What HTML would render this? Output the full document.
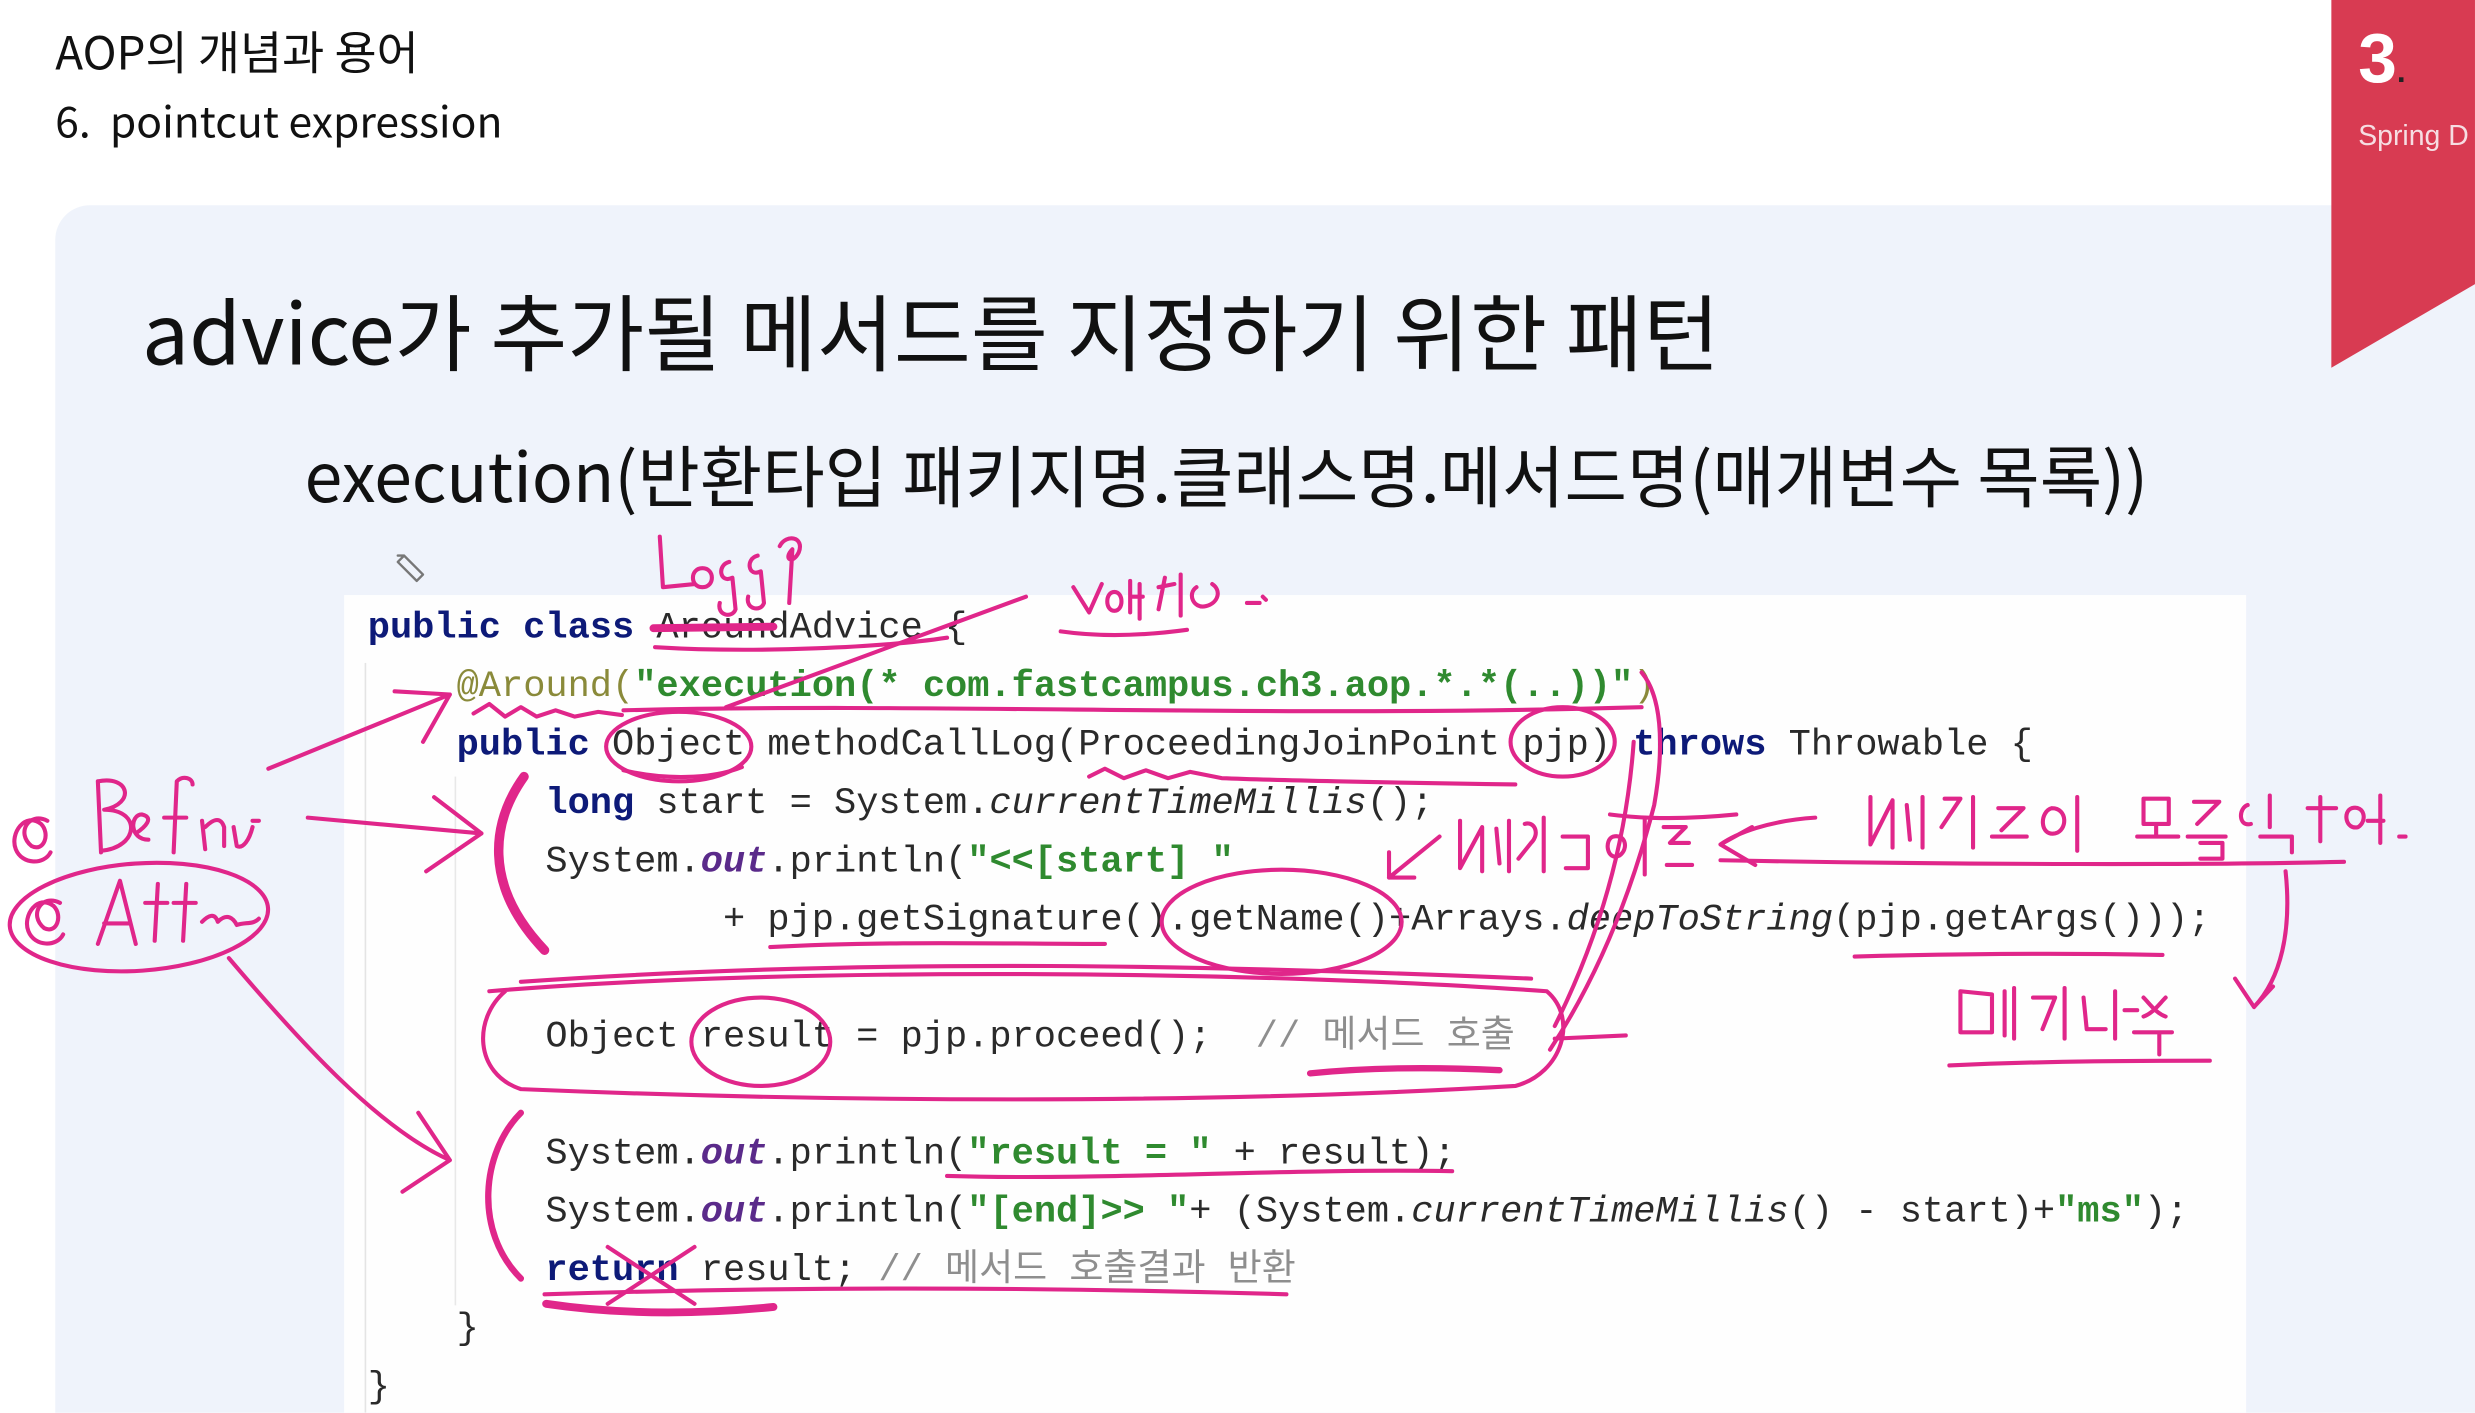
<!DOCTYPE html>
<html><head><meta charset="utf-8">
<style>
html,body{margin:0;padding:0;background:#fff;overflow:hidden}
#w{position:absolute;left:0;top:0;width:1568px;height:895px;transform:scale(1.57844);transform-origin:0 0;background:#fff;font-family:"Liberation Sans","Noto Sans CJK KR",sans-serif;color:#111;overflow:hidden}
.abs{position:absolute;white-space:pre}
.code{position:absolute;left:233px;font-family:"Liberation Mono","Noto Sans CJK KR",monospace;font-size:23.45px;line-height:37px;color:#2a2a2a;white-space:pre}
.k{color:#0d1a78;font-weight:bold}
.s{color:#2f8a2f;font-weight:bold}
.a{color:#8a8a3a}
.c{color:#8e8e8e}
.i{font-style:italic}
.o{font-style:italic;color:#5a2a8a;font-weight:bold}
</style></head><body>
<div id="w">
  <div class="abs" style="left:35px;top:13px;font-size:29px;font-family:'Noto Sans CJK KR','Liberation Sans',sans-serif;line-height:38px">AOP의 개념과 용어</div>
  <div class="abs" style="left:35px;top:57px;font-size:27px;font-family:'Noto Sans CJK KR','Liberation Sans',sans-serif;line-height:38px">6.  pointcut expression</div>

  <div style="position:absolute;left:35px;top:130px;width:1560px;height:800px;background:#eff3fb;border-radius:22px"></div>

  <svg style="position:absolute;left:0;top:0" width="1568" height="895">
    <polygon points="1477,0 1568,0 1568,180 1477,233" fill="#d83b52"/>
  </svg>
  <div class="abs" style="left:1494px;top:12px;font-size:44px;font-weight:bold;color:#fff;line-height:52px">3<span style="color:#222;font-size:20px">.</span></div>
  <div class="abs" style="left:1494px;top:74px;font-size:18px;color:#f6dde2;line-height:24px">Spring D</div>

  <div class="abs" style="left:90px;top:172px;font-size:53px;font-family:'Noto Sans CJK KR','Liberation Sans',sans-serif;line-height:74px;color:#111">advice가 추가될 메서드를 지정하기 위한 패턴</div>
  <div class="abs" style="left:193px;top:270px;font-size:43px;font-family:'Noto Sans CJK KR','Liberation Sans',sans-serif;line-height:60px;color:#111">execution(반환타입 패키지명.클래스명.메서드명(매개변수 목록))</div>

  <div style="position:absolute;left:218px;top:377px;width:1205px;height:530px;background:#fefefe"></div>
  <div style="position:absolute;left:231px;top:420px;width:1px;height:475px;background:#e4e4e4"></div>
  <div style="position:absolute;left:288px;top:492px;width:1px;height:335px;background:#e8e8e8"></div>

  <div class="code" style="top:379.5px"><span class="k">public class</span> AroundAdvice {
    <span class="a">@Around(</span><span class="s">"execution(* com.fastcampus.ch3.aop.*.*(..))"</span><span class="a">)</span>
    <span class="k">public</span> Object methodCallLog(ProceedingJoinPoint pjp) <span class="k">throws</span> Throwable {
        <span class="k">long</span> start = System.<span class="i">currentTimeMillis</span>();
        System.<span class="o">out</span>.println(<span class="s">"&lt;&lt;[start] "</span>
                + pjp.getSignature().getName()+Arrays.<span class="i">deepToString</span>(pjp.getArgs()));

        Object result = pjp.proceed();  <span class="c">// 메서드 호출</span>

        System.<span class="o">out</span>.println(<span class="s">"result = "</span> + result);
        System.<span class="o">out</span>.println(<span class="s">"[end]&gt;&gt; "</span>+ (System.<span class="i">currentTimeMillis</span>() - start)+<span class="s">"ms"</span>);
        <span class="k">return</span> result; <span class="c">// 메서드 호출결과 반환</span>
    }
}</div>

  <svg style="position:absolute;left:0;top:0" width="1568" height="895" fill="none" stroke="#e0268a" stroke-width="2.6" stroke-linecap="round" stroke-linejoin="round">
    <g stroke="#777" stroke-width="1.5"><path d="M256 352 l12 12 l-4 4 l-12 -12 z M252 352 l4 0"/></g>
    <path d="M418 340 L420 372 L440 370 M445 360 c-8 0 -8 12 0 12 c8 0 8 -12 0 -12 M462 356 c-8 2 -6 14 2 10 l2 20 c-2 6 -12 4 -10 -4 M480 352 c-8 2 -6 14 2 10 l2 20 c-2 6 -12 4 -10 -4 M494 346 c4 -8 16 -6 12 4 c-4 8 -10 4 -4 -2 l-2 34"/>
    <path d="M414 398 L490 397" stroke-width="5"/>
    <path d="M415 410 C480 414 560 410 600 404"/>
    <path d="M460 448 L650 378"/>
    <path d="M680 372 L690 388 L698 370 M706 375 c-6 0 -6 12 0 12 c6 0 6 -12 0 -12 M716 368 l0 20 M722 370 l0 22 M716 378 l8 0 M738 366 l-4 20 M734 372 l10 -2 M748 364 l0 26 M758 372 c-6 4 -2 14 6 12 c8 -2 10 -10 4 -14 M790 382 l8 0 M800 378 l2 2"/>
    <path d="M672 400 C700 404 730 402 752 399"/>
    <path d="M395 450 C600 445 800 455 1040 448"/>
    <path d="M300 452 l10 -6 l10 8 l10 -6 l10 6 l12 -4 l12 4 l15 -3 l15 2"/>
    <path d="M170 487 L285 440 M250 438 L285 440 L268 470"/>
    <ellipse cx="430" cy="473" rx="46" ry="22"/>
    <path d="M395 488 C420 494 450 494 470 486"/>
    <path d="M1040 426 C1052 440 1055 470 1048 510 C1030 580 1005 630 982 665"/>
    <path d="M1035 470 C1030 540 1010 600 985 650"/>
    <ellipse cx="990" cy="470" rx="33" ry="22"/>
    <path d="M690 492 l10 -5 l12 6 l14 -5 l14 5 l14 -4 l20 4 C800 494 880 496 960 497"/>
    <path d="M30 520 c-12 -6 -20 8 -10 16 c8 4 12 -8 6 -14 c-10 -8 -20 6 -16 16 c4 10 18 10 22 2 M62 495 L64 540 M62 495 c20 -4 24 14 4 18 c24 0 22 24 -2 26 M86 528 c6 -4 12 -10 4 -12 c-8 0 -8 16 4 16 M110 540 l2 -45 c4 -4 10 -2 10 2 M104 518 l14 0 M128 520 l2 18 M130 524 c6 -6 10 -6 12 0 l0 12 M148 524 l2 12 c4 2 8 -4 10 -12 M160 520 l4 0"/>
    <path d="M38 572 c-12 -6 -20 8 -10 16 c8 4 12 -8 6 -14 c-10 -8 -20 6 -16 16 c4 10 18 10 22 2 M62 598 L76 558 L86 598 M66 585 l16 0 M98 596 l2 -36 M92 572 l14 0 M116 596 l2 -36 M110 572 l14 0 M128 584 c4 -4 8 -6 10 0 c6 -6 10 -2 12 2 M150 586 c6 -2 10 0 14 -4"/>
    <ellipse cx="88" cy="581" rx="82" ry="34" transform="rotate(-4 88 581)"/>
    <path d="M195 518 L305 528 M275 505 L305 528 L270 552"/>
    <path d="M332 492 C312 520 305 560 345 602" stroke-width="6"/>
    <path d="M145 607 C190 660 240 715 285 735 M265 705 L285 735 L255 755"/>
    <path d="M330 705 C305 730 300 780 330 810" stroke-width="4"/>
    <path d="M310 628 C500 612 800 615 980 628 C1000 645 990 680 960 688 C760 700 520 698 330 690 C300 680 300 645 320 628"/>
    <path d="M330 622 C560 606 780 612 970 620"/>
    <ellipse cx="482" cy="660" rx="44" ry="28"/>
    <ellipse cx="812" cy="584" rx="76" ry="33"/>
    <path d="M488 600 C560 596 640 598 700 598"/>
    <path d="M912 530 L880 556 M880 540 L880 556 L896 556"/>
    <path d="M925 520 l0 30 l14 -26 l0 28 M948 525 l2 22 M956 520 l0 32 M966 522 c6 -2 10 6 4 12 l-8 10 M978 518 l0 34 M990 530 l16 0 M1006 530 l0 20 l-14 0 M1022 530 c-6 2 -4 16 4 12 c6 -4 4 -14 -4 -12 M1042 518 l0 36 M1054 524 l14 0 l-10 10 l12 0 M1056 548 l16 0"/>
    <path d="M1150 518 C1120 520 1100 528 1090 535 M1110 524 L1090 535 L1112 548"/>
    <path d="M1020 516 C1050 520 1080 518 1100 516"/>
    <path d="M1185 505 l0 30 l14 -28 l0 30 M1208 510 l2 22 M1218 505 l0 32 M1232 506 l10 0 l-12 18 M1250 505 l0 32 M1266 512 l16 0 l-14 14 M1262 530 l22 0 M1300 512 c-8 2 -8 18 2 16 c8 -2 8 -16 -2 -16 M1316 505 l0 34 M1358 506 l16 0 l0 16 l-16 0 z M1354 530 l26 0 M1366 522 l0 8 M1390 508 l16 0 l-14 14 M1386 530 l24 0 M1394 534 l14 0 l0 10 l-14 0 M1424 510 c-6 2 -6 14 2 12 M1438 504 l0 20 M1432 530 l20 0 l0 10 M1470 505 l0 28 M1462 512 l18 0 M1490 512 c-6 2 -4 14 4 12 c6 -4 4 -14 -4 -12 M1500 520 l10 0 M1508 504 l0 30 M1520 530 l4 0"/>
    <path d="M1090 545 C1250 548 1400 548 1485 546"/>
    <path d="M1448 552 C1452 590 1445 620 1428 638 M1416 620 L1428 638 L1440 625"/>
    <path d="M1175 606 C1250 604 1320 604 1370 605"/>
    <path d="M1242 628 l0 26 l20 0 l0 -24 z M1270 628 l0 28 M1276 626 l0 32 M1288 632 l14 0 l-8 20 M1308 626 l0 32 M1320 632 l2 20 l12 0 M1340 628 l0 30 M1346 640 l8 0 M1358 632 c4 4 8 10 14 12 M1372 632 c-4 4 -8 10 -14 12 M1352 654 l24 0 M1368 654 l0 14"/>
    <path d="M1235 675 C1300 672 1360 672 1400 672"/>
    <path d="M830 680 C870 676 910 676 950 678" stroke-width="4"/>
    <path d="M985 658 L1030 656"/>
    <path d="M600 745 C700 748 820 740 920 742"/>
    <path d="M385 790 L440 826 M440 790 L385 826"/>
    <path d="M345 820 C500 815 650 815 815 820"/>
    <path d="M346 826 C400 834 450 832 490 828" stroke-width="5"/>
  </svg>
</div>
</body></html>
